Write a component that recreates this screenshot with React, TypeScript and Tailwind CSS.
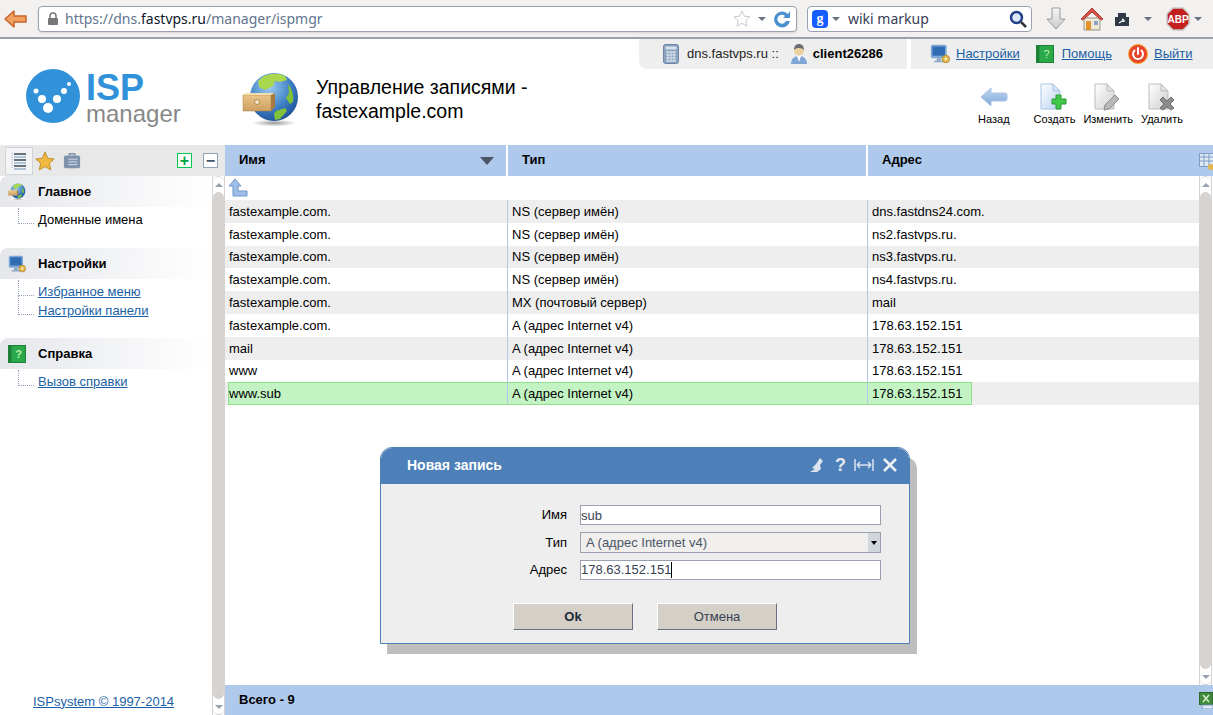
import type { ReactNode } from "react";

const records = [
  ["fastexample.com.", "NS (сервер имён)", "dns.fastdns24.com."],
  ["fastexample.com.", "NS (сервер имён)", "ns2.fastvps.ru."],
  ["fastexample.com.", "NS (сервер имён)", "ns3.fastvps.ru."],
  ["fastexample.com.", "NS (сервер имён)", "ns4.fastvps.ru."],
  ["fastexample.com.", "MX (почтовый сервер)", "mail"],
  ["fastexample.com.", "A (адрес Internet v4)", "178.63.152.151"],
  ["mail", "A (адрес Internet v4)", "178.63.152.151"],
  ["www", "A (адрес Internet v4)", "178.63.152.151"],
];

function Globe({ size = 58 }: { size?: number }) {
  return (
    <svg width={size} height={size} viewBox="0 0 58 58">
      <defs>
        <radialGradient id="globeSea" cx="0.4" cy="0.3" r="0.75">
          <stop offset="0" stopColor="#9ccdf2" />
          <stop offset="0.6" stopColor="#3f7fc4" />
          <stop offset="1" stopColor="#1d4f96" />
        </radialGradient>
        <radialGradient id="globeShadow" cx="0.5" cy="0.5" r="0.5">
          <stop offset="0" stopColor="#9a9a9a" />
          <stop offset="1" stopColor="#ffffff" />
        </radialGradient>
        <linearGradient id="drawerFront" x1="0" y1="0" x2="0" y2="1">
          <stop offset="0" stopColor="#e9c688" />
          <stop offset="1" stopColor="#cda060" />
        </linearGradient>
      </defs>
      <ellipse cx="32" cy="52" rx="22" ry="3.500" fill="url(#globeShadow)" />
      <circle cx="32" cy="26" r="24" fill="url(#globeSea)" />
      <path d="M22 5c7-3 15-3 21 0l2 4-7 2-5-1-2 5-8 4-6-3-1-6z" fill="#a9d84e" />
      <path d="M46 13c4 5 6 11 5 18l-3 2-4-6 3-5z" fill="#7fc23a" />
      <path d="M34 40l9-3 2 3-7 8-5 1-1-6z" fill="#7fc23a" />
      <path d="M1 24h28v16H1z" fill="url(#drawerFront)" stroke="#a98040" strokeWidth="0.500" />
      <path d="M1 24l2-2h30l-4 2z" fill="#f3dcae" />
      <path d="M29 24l4-2v14l-4 4z" fill="#a87c40" />
      <circle cx="15" cy="31" r="2.500" fill="#f4e6c8" stroke="#a47c40" strokeWidth="0.800" />
    </svg>
  );
}

function Monitor({ size = 24 }: { size?: number }) {
  return (
    <svg width={size} height={size} viewBox="0 0 24 24">
      <rect x="1" y="1" width="19" height="16" rx="2" fill="#7ea6d6" />
      <rect x="3" y="3" width="15" height="11" fill="#2f6cb4" />
      <path d="M8 17h5v3h3v2H5v-2h3z" fill="#8fa8c8" />
      <circle cx="19" cy="18" r="4.500" fill="#e2b84e" stroke="#a9852f" />
      <circle cx="19" cy="18" r="1.500" fill="#fff3c8" />
    </svg>
  );
}

function HelpBook({ size = 18 }: { size?: number }) {
  return (
    <svg width={size} height={size} viewBox="0 0 18 18">
      <rect x="0.500" y="0.500" width="17" height="17" fill="#2aa84a" stroke="#1c8037" />
      <rect x="0.500" y="0.500" width="3" height="17" fill="#1c8037" />
      <text x="10.500" y="13" fontSize="11" fill="#b9f2a8" textAnchor="middle" fontFamily="Liberation Sans">?</text>
    </svg>
  );
}

function Power() {
  return (
    <svg width="20" height="20" viewBox="0 0 20 20">
      <circle cx="10" cy="10" r="9.500" fill="#e8452c" />
      <circle cx="10" cy="10" r="9.500" fill="none" stroke="#f5a623" strokeWidth="1" />
      <path d="M6.500 6.500a5 5 0 1 0 7 0M10 4v6" fill="none" stroke="#fff" strokeWidth="2" strokeLinecap="round" />
    </svg>
  );
}

function Calculator() {
  return (
    <svg width="16" height="20" viewBox="0 0 16 20">
      <rect x="0.500" y="0.500" width="15" height="19" rx="2" fill="#8aa2bf" stroke="#6d86a6" />
      <rect x="2.500" y="2.500" width="11" height="3" fill="#d8e2ee" />
      <path d="M3 8h10M3 11h10M3 14h10M3 17h10M5 7v11M8 7v11M11 7v11" stroke="#dde6f0" strokeWidth="1" />
    </svg>
  );
}

function UserIcon() {
  return (
    <svg width="20" height="22" viewBox="0 0 20 22">
      <path d="M2 21c0-5 3-8 8-8s8 3 8 8z" fill="#7ea6d6" />
      <path d="M8 13h4l-2 6z" fill="#fff" />
      <circle cx="10" cy="7.500" r="5" fill="#eccf9f" />
      <path d="M5 7c0-4 2-6 5-6s5 2 5 6c-2-2-7-3-10 0z" fill="#6a6f76" />
    </svg>
  );
}

function DocBase({ blue, children }: { blue?: boolean; children?: ReactNode }) {
  return (
    <svg width="28" height="28" viewBox="0 0 28 28">
      <defs>
        <linearGradient id="docBlue" x1="0" y1="0" x2="1" y2="1">
          <stop offset="0" stopColor="#ffffff" />
          <stop offset="1" stopColor="#b9d2f0" />
        </linearGradient>
        <linearGradient id="docGray" x1="0" y1="0" x2="1" y2="1">
          <stop offset="0" stopColor="#ffffff" />
          <stop offset="1" stopColor="#cfcfcf" />
        </linearGradient>
      </defs>
      <path d="M1 1h12l7 7v18H1z" fill={blue ? "url(#docBlue)" : "url(#docGray)"} stroke={blue ? "#a9c4e6" : "#bdbdbd"} />
      <path d="M13 1v7h7z" fill={blue ? "#d4e3f6" : "#e2e2e2"} stroke={blue ? "#a9c4e6" : "#bdbdbd"} />
      {children}
    </svg>
  );
}

function ActionButton({ icon, label, className }: { icon: ReactNode; label: string; className?: string }) {
  return (
    <div className={`flex flex-col items-center text-[11px] text-black ${className ?? ""}`}>
      <div className="flex h-8 items-end">{icon}</div>
      <span>{label}</span>
    </div>
  );
}

function Section({ title, icon, children }: { title: string; icon: ReactNode; children: ReactNode }) {
  return (
    <div>
      <div className="flex h-[31px] items-center gap-3 rounded-tl-lg bg-gradient-to-r from-gray-200 to-white pl-2 font-bold text-black">
        <div className="flex w-[18px] justify-center">{icon}</div>
        {title}
      </div>
      <div className="flex flex-col pt-[3px]">{children}</div>
    </div>
  );
}

function TreeItem({ label, link, tall }: { label: string; link?: boolean; tall?: boolean }) {
  return (
    <div className="flex h-[19px] items-center pl-[18px]">
      <div className={`w-4 border-b border-l border-dotted border-slate-400 ${tall ? "-mt-3 h-5" : "-mt-2 h-4"}`} />
      <span className={`ml-1 ${link ? "text-[#1a5fa5] underline" : "text-black"}`}>{label}</span>
    </div>
  );
}

function Scrollbar() {
  return (
    <div className="flex w-[13px] shrink-0 flex-col border-x border-stone-300 bg-white">
      <div className="flex h-4 items-center justify-center rounded-t-md border-t border-stone-300">
        <div className="h-0 w-0 border-x-4 border-b-4 border-x-transparent border-b-gray-400" />
      </div>
      <div className="flex-1 rounded-md border border-stone-300 bg-stone-300" />
      <div className="flex h-4 items-center justify-center rounded-b-md border-b border-stone-300">
        <div className="h-0 w-0 border-x-4 border-t-4 border-x-transparent border-t-gray-400" />
      </div>
    </div>
  );
}

function BrowserBar() {
  return (
    <div className="flex h-[39px] shrink-0 items-center gap-2.5 border-b-2 border-gray-400 bg-[#f2f1f0] pl-1 font-['Noto_Sans'] text-sm">
      <svg width="24" height="20" viewBox="0 0 24 20">
        <path d="M1 10 10 2v5h12v6H10v5z" fill="#f0a060" stroke="#c8642a" strokeWidth="1.500" strokeLinejoin="round" />
      </svg>
      <div className="flex h-[26px] w-[759px] items-center rounded border border-gray-400 bg-white pl-2 pr-1 shadow-sm">
        <svg width="12" height="14" viewBox="0 0 12 14" className="mr-1.5">
          <path d="M3 6V4a3 3 0 0 1 6 0v2" fill="none" stroke="#777" strokeWidth="1.500" />
          <rect x="1" y="6" width="10" height="7" rx="1" fill="#777" />
        </svg>
        <span className="text-slate-500">
          https://dns.<span className="text-slate-900">fastvps.ru</span>/manager/ispmgr
        </span>
        <svg width="20" height="20" viewBox="0 0 20 20" className="ml-auto">
          <path d="m10 2 2.400 5.200 5.600.6-4.200 3.800 1.200 5.600-5-2.900-5 2.900 1.200-5.600L2 7.800l5.600-.6z" fill="#fff" stroke="#c8c8c8" />
        </svg>
        <div className="mx-1.5 h-0 w-0 border-x-4 border-t-4 border-x-transparent border-t-gray-500" />
        <svg width="20" height="20" viewBox="0 0 20 20">
          <path d="M16 5a8 8 0 1 0 2 7h-4a4.500 4.500 0 1 1-1-5l-2 2h7V2z" fill="#4a90d0" />
        </svg>
      </div>
      <div className="flex h-[26px] w-[225px] items-center rounded border border-gray-400 bg-white pl-1 pr-1">
        <div className="flex h-[18px] w-4 items-center justify-center rounded-sm bg-blue-600 font-['Liberation_Serif'] text-sm font-bold text-white">g</div>
        <div className="mx-1 h-0 w-0 border-x-4 border-t-4 border-x-transparent border-t-gray-500" />
        <span className="ml-1 text-gray-700">wiki markup</span>
        <svg width="18" height="18" viewBox="0 0 18 18" className="ml-auto">
          <circle cx="7.500" cy="7.500" r="5.500" fill="#dce8f8" stroke="#1f3f88" strokeWidth="2.500" />
          <path d="m12 12 5 5" stroke="#333" strokeWidth="2.500" />
        </svg>
      </div>
      <svg width="20" height="24" viewBox="0 0 20 24" className="ml-1">
        <defs>
          <linearGradient id="downArrow" x1="0" y1="0" x2="0" y2="1">
            <stop offset="0" stopColor="#f6f6f6" />
            <stop offset="1" stopColor="#c8ccd0" />
          </linearGradient>
        </defs>
        <path d="M6 1h8v11h5l-9 10-9-10h5z" fill="url(#downArrow)" stroke="#9a9a9a" />
      </svg>
      <svg width="24" height="24" viewBox="0 0 24 24" className="ml-1">
        <path d="M4 11h16v12H4z" fill="#ece8da" stroke="#9a9484" />
        <path d="M12 1 1 12l2 1 9-8 9 8 2-1z" fill="#d9534a" stroke="#a83a30" />
        <rect x="6" y="14" width="5" height="9" fill="#e0922c" />
        <rect x="14" y="14" width="4" height="4" fill="#8aa2bf" />
      </svg>
      <svg width="16" height="16" viewBox="0 0 16 16">
        <path d="M1 6h3V2h8v4h3v9H1z" fill="#2f3a46" />
        <path d="m5 12 5-3M10 9l-2-1M10 9v2" stroke="#fff" strokeWidth="1.200" fill="none" />
      </svg>
      <div className="ml-1 h-0 w-0 border-x-4 border-t-4 border-x-transparent border-t-gray-500" />
      <svg width="24" height="24" viewBox="0 0 24 24" className="ml-1">
        <path d="M7 1h10l6 6v10l-6 6H7l-6-6V7z" fill="#c41f1f" stroke="#c8c8c8" strokeWidth="1.500" />
        <text x="12" y="15.500" textAnchor="middle" fontSize="10" fontWeight="bold" fill="#fff" fontFamily="Liberation Sans">ABP</text>
      </svg>
      <div className="-ml-1.5 h-0 w-0 border-x-4 border-t-4 border-x-transparent border-t-gray-500" />
    </div>
  );
}

function AppHeader() {
  return (
    <div className="flex h-[106px] shrink-0">
      <div className="flex w-[242px] shrink-0 items-start gap-1 pl-[26px] pt-7">
        <svg width="56" height="60" viewBox="0 0 56 60" className="shrink-0">
          <circle cx="27" cy="29" r="27" fill="#3192da" />
          <circle cx="10" cy="24" r="2.500" fill="#fff" />
          <circle cx="16" cy="32" r="4" fill="#fff" />
          <circle cx="22" cy="41" r="5" fill="#fff" />
          <circle cx="31" cy="32" r="4" fill="#fff" />
          <circle cx="38" cy="24" r="3" fill="#fff" />
          <circle cx="43" cy="17" r="2" fill="#fff" />
        </svg>
        <div className="flex flex-col pt-px">
          <span className="text-4xl font-bold leading-10 text-[#3192da]">ISP</span>
          <span className="-mt-1.5 text-2xl leading-6 text-[#888888]">manager</span>
        </div>
      </div>
      <div className="flex items-start gap-4 pt-8">
        <Globe />
        <div className="pt-1 text-[19.5px] leading-6 text-black">
          Управление записями -<br />
          fastexample.com
        </div>
      </div>
      <div className="ml-auto flex flex-col items-end">
        <div className="flex gap-1">
          <div className="flex h-[30px] w-[268px] items-center rounded-bl-lg bg-[#eeeeee] pl-6 text-[#222]">
            <Calculator />
            <span className="ml-2">dns.fastvps.ru ::</span>
            <span className="ml-2.5"><UserIcon /></span>
            <span className="ml-1 font-bold text-black">client26286</span>
          </div>
          <div className="flex h-[30px] w-[302px] items-center bg-[#eeeeee] pl-[19px]">
            <Monitor size={20} />
            <a className="ml-1.5 text-[#1a5fa5] underline">Настройки</a>
            <span className="ml-4"><HelpBook /></span>
            <a className="ml-2 text-[#1a5fa5] underline">Помощь</a>
            <span className="ml-4"><Power /></span>
            <a className="ml-1.5 text-[#1a5fa5] underline">Выйти</a>
          </div>
        </div>
        <div className="flex gap-2 pr-[30px] pt-2.5">
          <ActionButton
            className="mr-4"
            label="Назад"
            icon={
              <svg width="28" height="20" viewBox="0 0 28 20" className="mb-1">
                <defs>
                  <linearGradient id="backArrow" x1="0" y1="0" x2="0" y2="1">
                    <stop offset="0" stopColor="#c3d8f2" />
                    <stop offset="1" stopColor="#7fa6d8" />
                  </linearGradient>
                </defs>
                <path d="M1 10 11 1v5h14q2 0 2 2v4q0 2-2 2H11v5z" fill="url(#backArrow)" stroke="#a9c4e6" strokeLinejoin="round" />
              </svg>
            }
          />
          <ActionButton
            label="Создать"
            icon={
              <DocBase blue>
                <path d="M16 12h5v4h5v5h-5v5h-5v-5h-4v-5h4z" fill="#3fc84a" stroke="#2a9a34" />
              </DocBase>
            }
          />
          <ActionButton
            label="Изменить"
            icon={
              <DocBase>
                <path d="m21 12 4 4-10 10-5 1 1-5z" fill="#b8b8b8" stroke="#8c8c8c" />
              </DocBase>
            }
          />
          <ActionButton
            label="Удалить"
            icon={
              <DocBase>
                <path d="m12 17 3-3 4 4 4-4 3 3-4 4 4 4-3 2-4-3-4 3-3-2 4-4z" fill="#8c8c8c" stroke="#6f6f6f" />
              </DocBase>
            }
          />
        </div>
      </div>
    </div>
  );
}

function Sidebar() {
  return (
    <div className="flex w-[225px] shrink-0 flex-col">
      <div className="flex h-[31px] shrink-0 items-center bg-[#e8e8e8] pl-[5px] pr-[7px]">
        <div className="flex h-7 w-7 items-center justify-center border border-gray-300 bg-gray-100">
          <svg width="16" height="18" viewBox="0 0 16 18">
            <path d="M3 2h12M3 8h12M3 14h12" stroke="#3c4650" strokeWidth="1.500" />
            <path d="M3 5h12M3 11h12M3 17h12" stroke="#9db4d0" strokeWidth="1.500" />
            <path d="M1 1v16" stroke="#9db4d0" strokeDasharray="1 1" />
          </svg>
        </div>
        <svg width="20" height="20" viewBox="0 0 22 22" className="ml-0.5">
          <path d="m11 1 3 7 7 .8-5.200 4.800 1.500 7.200-6.300-3.700-6.300 3.700 1.500-7.200L1 8.800 8 8z" fill="#f0b840" stroke="#b98a25" />
        </svg>
        <svg width="18" height="18" viewBox="0 0 20 18" className="ml-2">
          <path d="M7 3V1h6v2" fill="none" stroke="#6d8099" strokeWidth="1.500" />
          <rect x="1" y="3" width="18" height="14" rx="2" fill="#7f93ad" />
          <path d="M6 7h10M6 10h10M6 13h10" stroke="#dbe3ee" />
        </svg>
        <div className="ml-auto flex gap-[11px]">
          <div className="flex h-[15px] w-[15px] items-center justify-center border border-green-500 bg-white text-base font-bold leading-none text-green-600">+</div>
          <div className="flex h-[15px] w-[15px] items-center justify-center border border-slate-400 bg-white text-base font-bold leading-none text-slate-600">−</div>
        </div>
      </div>
      <div className="flex min-h-0 flex-1">
        <div className="flex w-[212px] flex-col">
          <div className="flex flex-col gap-[9px]">
            <div className="h-[63px]">
              <Section title="Главное" icon={<Globe size={20} />}>
                <TreeItem label="Доменные имена" />
              </Section>
            </div>
            <div className="h-[81px]">
              <Section title="Настройки" icon={<Monitor size={20} />}>
                <TreeItem label="Избранное меню" link />
                <TreeItem label="Настройки панели" link tall />
              </Section>
            </div>
            <Section title="Справка" icon={<HelpBook />}>
              <TreeItem label="Вызов справки" link />
            </Section>
          </div>
          <a className="mt-auto pb-1 pl-[33px] text-[#1a5fa5] underline">ISPsystem © 1997-2014</a>
        </div>
        <Scrollbar />
      </div>
    </div>
  );
}

function RecordRow({ cells, index }: { cells: string[]; index: number }) {
  return (
    <div className={`flex h-[22.8px] items-center text-black ${index % 2 === 0 ? "bg-[#eeeeee]" : "bg-white"}`}>
      <div className="flex h-full w-[283px] shrink-0 items-center border-r border-[#aec9ec] pl-1">{cells[0]}</div>
      <div className="flex h-full w-[360px] shrink-0 items-center border-r border-[#aec9ec] pl-1">{cells[1]}</div>
      <div className="flex h-full flex-1 items-center pl-1">{cells[2]}</div>
    </div>
  );
}

function RecordTable() {
  return (
    <div className="flex min-w-0 flex-1 flex-col">
      <div className="flex h-[31px] shrink-0 items-center bg-[#aec9ec] font-bold text-black">
        <div className="flex h-full w-[283px] shrink-0 items-center border-r-2 border-white pb-0.5 pl-3.5 pr-3">
          Имя
          <div className="ml-auto mt-0.5 h-0 w-0 border-x-[7px] border-t-8 border-x-transparent border-t-gray-600" />
        </div>
        <div className="flex h-full w-[360px] shrink-0 items-center border-r-2 border-white pb-0.5 pl-3.5">Тип</div>
        <div className="flex h-full flex-1 items-center pb-0.5 pl-3.5">Адрес</div>
        <svg width="14" height="18" viewBox="0 0 14 18">
          <rect x="0.500" y="1.500" width="14" height="13" fill="#dfe9f6" stroke="#7d9cc4" />
          <path d="M0 5h14M0 9h14M5 2v13M10 2v13" stroke="#7d9cc4" />
          <circle cx="12" cy="15" r="3" fill="#e2b84e" />
        </svg>
      </div>
      <div className="flex min-h-0 flex-1">
        <div className="flex min-w-0 flex-1 flex-col">
          <div className="flex h-[24.1px] shrink-0 items-center pl-[3px]">
            <svg width="20" height="20" viewBox="0 0 20 20">
              <path d="M7 1 1 8h4v10h14v-5H10V8h3z" fill="#9dbfe8" stroke="#6f95c8" />
            </svg>
          </div>
          {records.map((cells, i) => (
            <RecordRow key={i} cells={cells} index={i} />
          ))}
          <div className="flex h-[23px] bg-[#eeeeee]">
            <div className="ml-[3px] flex h-full border border-[#8ee08e] bg-[#c3f3c3] text-black">
              <div className="flex h-full w-[279px] items-center border-r border-[#aec9ec]">www.sub</div>
              <div className="flex h-full w-[360px] items-center border-r border-[#aec9ec] pl-1">A (адрес Internet v4)</div>
              <div className="flex h-full w-[103px] items-center pl-1">178.63.152.151</div>
            </div>
          </div>
        </div>
        <Scrollbar />
        <div className="w-px shrink-0" />
      </div>
      <div className="flex h-[30px] shrink-0 items-center bg-[#aec9ec] pl-3.5 font-bold text-black">
        Всего - 9
        <svg width="14" height="18" viewBox="0 0 14 18" className="ml-auto">
          <rect x="0.500" y="1.500" width="13" height="12" fill="#3f8a3c" stroke="#2c6b2a" />
          <path d="m4 4 6 7M10 4l-6 7" stroke="#d8f0d0" strokeWidth="1.500" />
          <rect x="3" y="14" width="11" height="4" fill="#dfe9f6" stroke="#7d9cc4" />
        </svg>
      </div>
    </div>
  );
}

function FormRow({ label, children }: { label: string; children: ReactNode }) {
  return (
    <div className="flex items-center">
      <label className="w-[186px] text-right text-black">{label}</label>
      <div className="ml-[13px] w-[301px]">{children}</div>
    </div>
  );
}

function NewRecordDialog() {
  return (
    <div className="absolute left-[380px] top-[447px] flex h-[197px] w-[530px] flex-col rounded-t-xl border border-[#4d7fb8] bg-[#eeeeee] shadow-[7px_10px_0_#bebebe]">
      <div className="flex h-[36px] shrink-0 items-center rounded-t-xl bg-[#4d7fb8] pb-0.5 pl-[26px] pr-[11px] text-sm font-bold text-white">
        Новая запись
        <div className="ml-auto flex items-center gap-2 text-gray-200">
          <svg width="18" height="16" viewBox="0 0 18 16">
            <path d="m11 1 3 3-3 4 1 4-4 3H1l5-3-3-1 4-4z" fill="#dbe4ef" />
          </svg>
          <span className="text-lg leading-none">?</span>
          <svg width="20" height="14" viewBox="0 0 20 14">
            <path d="M1 1v12M19 1v12M3 7h14M3 7l3-3M3 7l3 3M17 7l-3-3M17 7l-3 3" stroke="#dbe4ef" strokeWidth="1.500" fill="none" />
          </svg>
          <svg width="16" height="16" viewBox="0 0 16 16">
            <path d="m2 2 12 12M14 2 2 14" stroke="#eef2f7" strokeWidth="2.500" />
          </svg>
        </div>
      </div>
      <div className="flex flex-col gap-[7px] pt-[21px]">
        <FormRow label="Имя">
          <input readOnly value="sub" className="h-5 w-full border border-gray-400 bg-white text-gray-700 outline-none" />
        </FormRow>
        <FormRow label="Тип">
          <div className="flex h-[21px] items-center justify-between border border-gray-400 bg-[#f1efed] pl-[5px] text-gray-600">
            A (адрес Internet v4)
            <div className="flex h-full w-3 items-center justify-center bg-gray-300">
              <div className="h-0 w-0 border-x-[3px] border-t-4 border-x-transparent border-t-black" />
            </div>
          </div>
        </FormRow>
        <FormRow label="Адрес">
          <div className="flex h-5 items-center border border-gray-400 bg-white text-gray-700">
            178.63.152.151
            <div className="h-4 w-px bg-black" />
          </div>
        </FormRow>
      </div>
      <div className="flex gap-6 pl-[132px] pt-[23px]">
        <button className="h-[27px] w-[120px] border border-b-gray-500 border-l-white border-r-gray-500 border-t-white bg-[#d4d0c8] font-bold text-gray-800">Ok</button>
        <button className="h-[27px] w-[120px] border border-b-gray-500 border-l-white border-r-gray-500 border-t-white bg-[#d4d0c8] text-gray-700">Отмена</button>
      </div>
    </div>
  );
}

export default function App() {
  return (
    <div className="relative flex h-screen w-full flex-col overflow-hidden bg-white font-['Liberation_Sans',sans-serif] text-[13px]">
      <BrowserBar />
      <AppHeader />
      <div className="flex min-h-0 flex-1">
        <Sidebar />
        <RecordTable />
      </div>
      <NewRecordDialog />
    </div>
  );
}
